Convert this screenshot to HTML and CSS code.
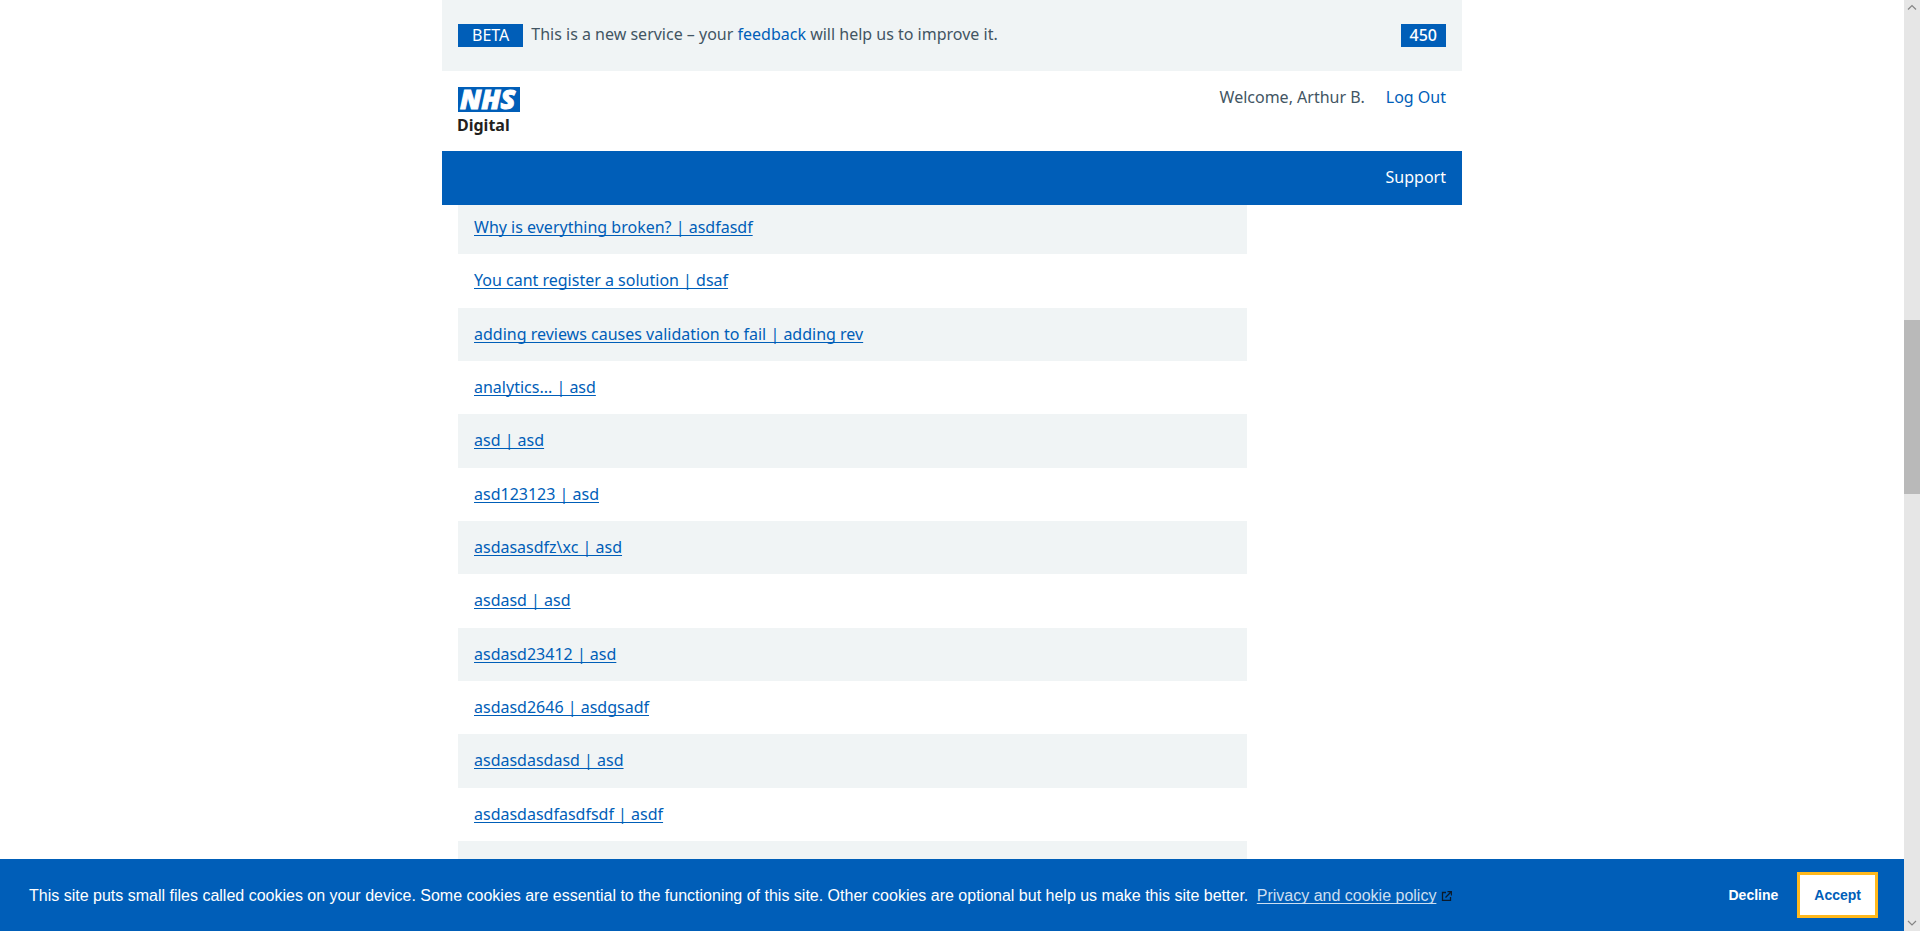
FILE: index.html
```html
<!DOCTYPE html>
<html lang="en">
<head>
<meta charset="utf-8">
<title>NHS Digital</title>
<link rel="stylesheet" href="styles.css">
</head>
<body>
<div class="viewport">
  <header class="site-header">
    <div class="beta-bar">
      <span class="tag">BETA</span>
      <p class="beta-text">This is a new service – your <a href="#">feedback</a> will help us to improve it.</p>
      <span class="tag tag-count">450</span>
    </div>
    <div class="brand-bar">
      <a class="logo" href="#" aria-label="NHS Digital home">
        <svg width="64" height="50" viewBox="0 0 64 50" aria-hidden="true">
          <rect width="62" height="25" fill="#005eb8"/>
          <text class="logo-nhs" x="2" y="22">NHS</text>
          <text class="logo-name" x="-1" y="44">Digital</text>
        </svg>
      </a>
      <div class="account">
        <span>Welcome, Arthur B.</span>
        <a href="#">Log Out</a>
      </div>
    </div>
    <nav class="main-nav"><a href="#">Support</a></nav>
  </header>
  <main class="content">
    <ul class="solutions">
      <li><a href="#">Why is everything broken? | asdfasdf</a></li>
      <li><a href="#">You cant register a solution | dsaf</a></li>
      <li><a href="#">adding reviews causes validation to fail | adding rev</a></li>
      <li><a href="#">analytics... | asd</a></li>
      <li><a href="#">asd | asd</a></li>
      <li><a href="#">asd123123 | asd</a></li>
      <li><a href="#">asdasasdfz\xc | asd</a></li>
      <li><a href="#">asdasd | asd</a></li>
      <li><a href="#">asdasd23412 | asd</a></li>
      <li><a href="#">asdasd2646 | asdgsadf</a></li>
      <li><a href="#">asdasdasdasd | asd</a></li>
      <li><a href="#">asdasdasdfasdfsdf | asdf</a></li>
      <li></li>
    </ul>
  </main>
  <section class="cookie-bar" aria-label="Cookie consent">
    <p class="cookie-text">This site puts small files called cookies on your device. Some cookies are essential to the functioning of this site. Other cookies are optional but help us make this site better.
      <a href="#">Privacy and cookie policy</a>
      <svg class="external" width="11" height="10" viewBox="0 0 11 10" aria-hidden="true"><path d="M5 1.500H1.500v8H9.500V6M6.500.5h4v4M10 1 4.500 6.500" fill="none" stroke="#0b1a2a" stroke-width="1.300"/></svg>
    </p>
    <div class="cookie-actions">
      <button class="decline" type="button">Decline</button>
      <button class="accept" type="button">Accept</button>
    </div>
  </section>
</div>
<div class="scrollbar" aria-hidden="true">
  <svg width="16" height="16" viewBox="0 0 16 16"><path d="M4 9.500 8 5.500l4 4" fill="none" stroke="#858585" stroke-width="1.200"/></svg>
  <div class="track"><div class="thumb"></div></div>
  <svg width="16" height="16" viewBox="0 0 16 16"><path d="M4 6l4 4 4-4" fill="none" stroke="#858585" stroke-width="1.200"/></svg>
</div>
</body>
</html>
```
FILE: styles.css
```css
* { box-sizing: border-box; }

html, body { height: 100%; }

body {
  margin: 0;
  display: flex;
  overflow: hidden;
  background: #fff;
  color: #425563;
  font-family: "Noto Sans", "Open Sans", sans-serif;
  font-size: 16px;
  line-height: 1.3333;
}

a { color: #005eb8; text-decoration: none; }

p { margin: 0; }

.viewport {
  flex: 1;
  min-width: 0;
  height: 100%;
  display: flex;
  flex-direction: column;
}

.site-header {
  position: relative;
  z-index: 1;
  flex: none;
  width: 100%;
  max-width: 1020px;
  margin: 0 auto;
  background: #fff;
}

.beta-bar {
  display: flex;
  align-items: flex-start;
  gap: 8px;
  padding: 24px 16px;
  background: #f0f4f5;
}

.tag {
  padding: 0 14px;
  background: #005eb8;
  color: #fff;
  line-height: 23px;
}

.tag-count {
  margin-left: auto;
  padding: 0 9px;
  font-weight: 500;
}

.beta-text { line-height: 21px; }

.brand-bar {
  display: flex;
  justify-content: space-between;
  padding: 16px 16px 14px;
}

.logo svg { display: block; overflow: visible; }

.logo-nhs {
  fill: #fff;
  stroke: #fff;
  stroke-width: 1px;
  font: italic 800 27px "Open Sans", "Noto Sans", sans-serif;
}

.logo-name {
  fill: #231f20;
  font: 700 16px "Noto Sans", sans-serif;
}

.account { display: flex; gap: 21px; }

.main-nav {
  padding: 16px 16px 17px;
  background: #005eb8;
  line-height: 21px;
  text-align: right;
}

.main-nav a { color: #fff; }

.content {
  flex: 1;
  min-height: 0;
  width: 100%;
  max-width: 1020px;
  margin: -4px auto 0;
  padding: 0 16px;
  overflow: hidden;
}

.solutions {
  max-width: 789px;
  margin: 0;
  padding: 0;
  list-style: none;
}

.solutions li { padding: 16px; }

.solutions li:nth-child(odd) { background: #f0f4f5; }

.solutions li:empty { min-height: 53px; }

.solutions a {
  text-decoration: underline 1px;
  text-underline-offset: 2px;
  text-decoration-skip-ink: none;
}

.cookie-bar {
  flex: none;
  display: flex;
  align-items: center;
  justify-content: space-between;
  padding: 13px 26px 13px 29px;
  background: #005eb8;
  color: #fff;
  font-family: "Liberation Sans", Arial, sans-serif;
  line-height: 25px;
}

.cookie-text a {
  margin-left: 4px;
  color: #ccdff1;
  text-decoration: underline 1px;
  text-underline-offset: 2px;
  text-decoration-skip-ink: none;
}

.cookie-actions { display: flex; gap: 2px; }

.cookie-actions button {
  height: 46px;
  padding: 0 14px;
  border: 3px solid transparent;
  font: 700 14px "Liberation Sans", Arial, sans-serif;
}

.decline { background: transparent; color: #fff; }

.cookie-actions .accept {
  border-color: #ffb81c;
  background: #fff;
  color: #005eb8;
}

.scrollbar {
  flex: none;
  width: 16px;
  display: flex;
  flex-direction: column;
  background: #e6e6e6;
}

.scrollbar svg { display: block; }

.track { flex: 1; padding-top: 304px; }

.thumb { height: 174px; background: #b9b9b9; }
```
